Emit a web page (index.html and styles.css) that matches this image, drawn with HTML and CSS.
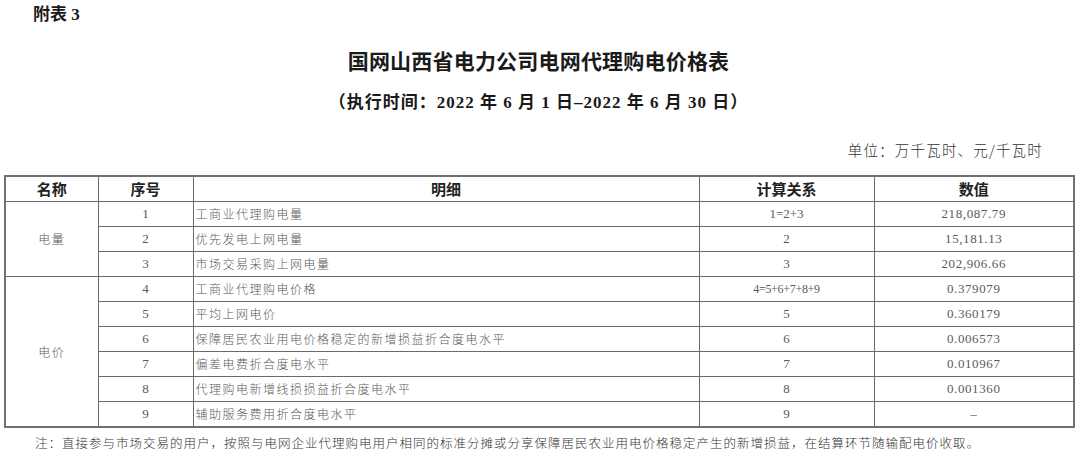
FILE: index.html
```html
<!DOCTYPE html>
<html lang="zh-CN">
<head>
<meta charset="utf-8">
<title>国网山西省电力公司电网代理购电价格表</title>
<link rel="stylesheet" href="styles.css">
</head>
<body>
<div class="page">
  <div class="tag">附表 3</div>
  <h1 class="title">国网山西省电力公司电网代理购电价格表</h1>
  <div class="subtitle">（执行时间：2022 年 6 月 1 日–2022 年 6 月 30 日）</div>
  <div class="unit">单位：万千瓦时、元/千瓦时</div>
  <table class="grid">
    <colgroup>
      <col class="c-name"><col class="c-seq"><col class="c-detail"><col class="c-calc"><col class="c-val">
    </colgroup>
    <thead>
      <tr><th>名称</th><th>序号</th><th>明细</th><th>计算关系</th><th>数值</th></tr>
    </thead>
    <tbody>
      <tr><td class="group" rowspan="3">电量</td><td class="num">1</td><td class="detail">工商业代理购电量</td><td class="num">1=2+3</td><td class="val">218,087.79</td></tr>
      <tr><td class="num">2</td><td class="detail">优先发电上网电量</td><td class="num">2</td><td class="val">15,181.13</td></tr>
      <tr><td class="num">3</td><td class="detail">市场交易采购上网电量</td><td class="num">3</td><td class="val">202,906.66</td></tr>
      <tr><td class="group" rowspan="6">电价</td><td class="num">4</td><td class="detail">工商业代理购电价格</td><td class="num formula">4=5+6+7+8+9</td><td class="val">0.379079</td></tr>
      <tr><td class="num">5</td><td class="detail">平均上网电价</td><td class="num">5</td><td class="val">0.360179</td></tr>
      <tr><td class="num">6</td><td class="detail">保障居民农业用电价格稳定的新增损益折合度电水平</td><td class="num">6</td><td class="val">0.006573</td></tr>
      <tr><td class="num">7</td><td class="detail">偏差电费折合度电水平</td><td class="num">7</td><td class="val">0.010967</td></tr>
      <tr><td class="num">8</td><td class="detail">代理购电新增线损损益折合度电水平</td><td class="num">8</td><td class="val">0.001360</td></tr>
      <tr><td class="num">9</td><td class="detail">辅助服务费用折合度电水平</td><td class="num">9</td><td class="val">–</td></tr>
    </tbody>
  </table>
  <p class="note">注：直接参与市场交易的用户，按照与电网企业代理购电用户相同的标准分摊或分享保障居民农业用电价格稳定产生的新增损益，在结算环节随输配电价收取。</p>
</div>
</body>
</html>
```
FILE: styles.css
```css
html, body {
  margin: 0;
  padding: 0;
  background: #ffffff;
}
body {
  font-family: "Noto Sans CJK SC", sans-serif;
  color: #222;
}
.page {
  width: 1069px;
  padding-left: 4px;
}
.tag {
  font-family: "Liberation Serif", "Noto Sans CJK SC", serif;
  font-weight: bold;
  font-size: 17px;
  line-height: 30px;
  height: 30px;
  padding-left: 29px;
  color: #1a1a1a;
}
.title {
  margin: 15px 0 0;
  font-size: 21px;
  line-height: 30px;
  font-weight: bold;
  text-align: center;
  color: #1a1a1a;
  letter-spacing: 0.2px;
}
.subtitle {
  margin-top: 13px;
  font-family: "Liberation Serif", "Noto Sans CJK SC", serif;
  font-weight: bold;
  font-size: 17px;
  line-height: 30px;
  letter-spacing: 1px;
  text-align: center;
  color: #1a1a1a;
}
.unit {
  margin-top: 20px;
  font-size: 14.5px;
  line-height: 24px;
  letter-spacing: 1.2px;
  text-align: right;
  padding-right: 30px;
  color: #333;
  font-weight: 300;
}
.grid {
  margin-top: 13px;
  width: 1069px;
  table-layout: fixed;
  border-collapse: collapse;
  border: 2px solid #707070;
}
.c-name { width: 93px; }
.c-seq { width: 95px; }
.c-detail { width: 506px; }
.c-calc { width: 175px; }
.c-val { width: 200px; }
.grid th, .grid td {
  border: 1px solid #6a6a6a;
  padding: 0;
  height: 24px;
  text-align: center;
  vertical-align: middle;
}
.grid th {
  font-size: 15px;
  font-weight: bold;
  color: #222;
  line-height: 24px;
}
.grid td {
  font-size: 12px;
  color: #5a5a5a;
  line-height: 24px;
  font-weight: 300;
}
.grid td.group {
  letter-spacing: 1.5px;
}
.grid td.detail {
  text-align: left;
  padding-left: 2px;
  letter-spacing: 1.5px;
  font-size: 12px;
}
.grid td.num {
  font-family: "Liberation Serif", "Noto Sans CJK SC", serif;
  font-size: 13px;
  font-weight: normal;
}
.grid td.formula {
  font-size: 12px;
  letter-spacing: -0.3px;
}
.grid td.val {
  font-family: "Liberation Serif", "Noto Sans CJK SC", serif;
  font-size: 13px;
  letter-spacing: 0.6px;
  font-weight: normal;
}
.note {
  margin: 5px 0 0;
  padding-left: 31px;
  font-size: 12.5px;
  line-height: 20px;
  letter-spacing: 1px;
  color: #333;
  white-space: nowrap;
  font-weight: 300;
}
```
